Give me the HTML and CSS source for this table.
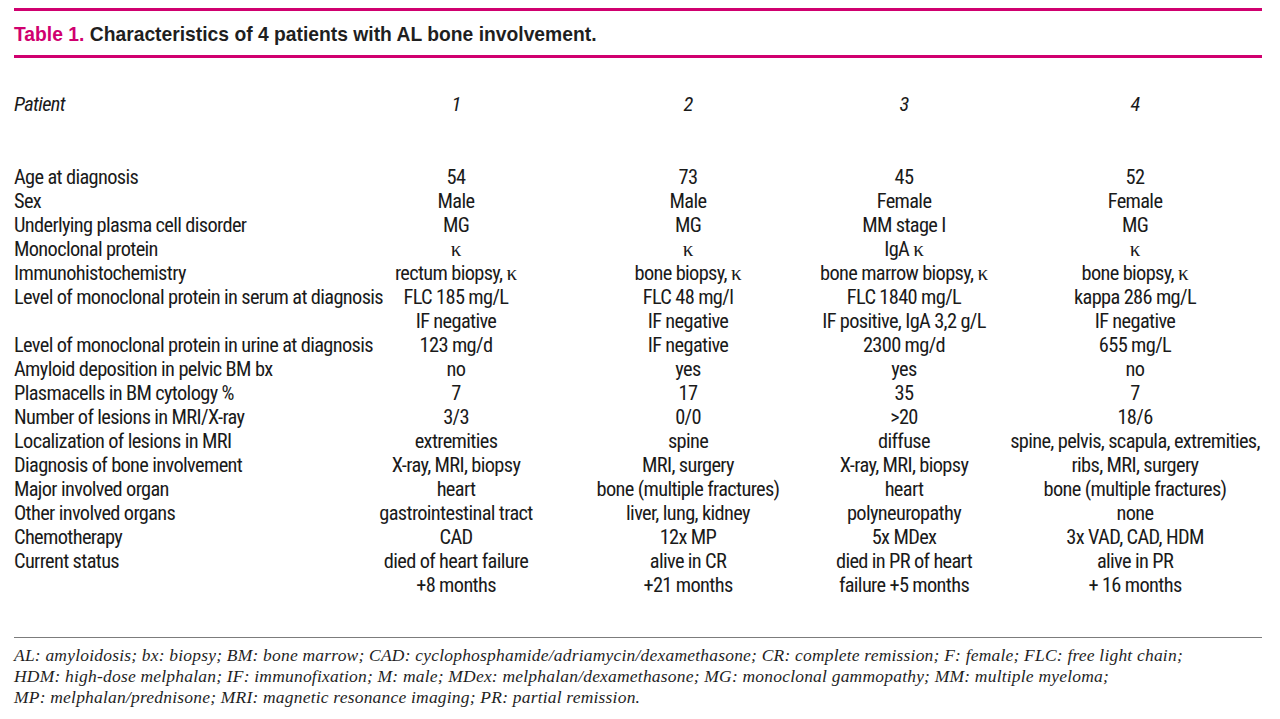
FILE: index.html
```html
<!DOCTYPE html>
<html lang="en">
<head>
<meta charset="utf-8">
<title>Table 1. Characteristics of 4 patients with AL bone involvement.</title>
<link rel="stylesheet" href="styles.css">
</head>
<body>
<div class="page">
  <div class="rule"></div>
  <h1 class="title"><span class="label">Table 1.</span> Characteristics of 4 patients with AL bone involvement.</h1>
  <div class="rule"></div>
  <table class="data">
    <colgroup>
      <col class="c-label"><col class="c1"><col class="c2"><col class="c3"><col class="c4">
    </colgroup>
    <thead>
      <tr class="head">
        <th>Patient</th><th>1</th><th>2</th><th>3</th><th>4</th>
      </tr>
    </thead>
    <tbody>
      <tr><td>Age at diagnosis</td><td>54</td><td>73</td><td>45</td><td>52</td></tr>
      <tr><td>Sex</td><td>Male</td><td>Male</td><td>Female</td><td>Female</td></tr>
      <tr><td>Underlying plasma cell disorder</td><td>MG</td><td>MG</td><td>MM stage I</td><td>MG</td></tr>
      <tr><td>Monoclonal protein</td><td><span class="k">κ</span></td><td><span class="k">κ</span></td><td>IgA <span class="k">κ</span></td><td><span class="k">κ</span></td></tr>
      <tr><td>Immunohistochemistry</td><td>rectum biopsy, <span class="k">κ</span></td><td>bone biopsy, <span class="k">κ</span></td><td>bone marrow biopsy, <span class="k">κ</span></td><td>bone biopsy, <span class="k">κ</span></td></tr>
      <tr><td>Level of monoclonal protein in serum at diagnosis</td><td>FLC 185 mg/L<br>IF negative</td><td>FLC 48 mg/l<br>IF negative</td><td>FLC 1840 mg/L<br>IF positive, IgA 3,2 g/L</td><td>kappa 286 mg/L<br>IF negative</td></tr>
      <tr><td>Level of monoclonal protein in urine at diagnosis</td><td>123 mg/d</td><td>IF negative</td><td>2300 mg/d</td><td>655 mg/L</td></tr>
      <tr><td>Amyloid deposition in pelvic BM bx</td><td>no</td><td>yes</td><td>yes</td><td>no</td></tr>
      <tr><td>Plasmacells in BM cytology %</td><td>7</td><td>17</td><td>35</td><td>7</td></tr>
      <tr><td>Number of lesions in MRI/X-ray</td><td>3/3</td><td>0/0</td><td>&gt;20</td><td>18/6</td></tr>
      <tr><td>Localization of lesions in MRI</td><td>extremities</td><td>spine</td><td>diffuse</td><td>spine, pelvis, scapula, extremities,</td></tr>
      <tr><td>Diagnosis of bone involvement</td><td>X-ray, MRI, biopsy</td><td>MRI, surgery</td><td>X-ray, MRI, biopsy</td><td>ribs, MRI, surgery</td></tr>
      <tr><td>Major involved organ</td><td>heart</td><td>bone (multiple fractures)</td><td>heart</td><td>bone (multiple fractures)</td></tr>
      <tr><td>Other involved organs</td><td>gastrointestinal tract</td><td>liver, lung, kidney</td><td>polyneuropathy</td><td>none</td></tr>
      <tr><td>Chemotherapy</td><td>CAD</td><td>12x MP</td><td>5x MDex</td><td>3x VAD, CAD, HDM</td></tr>
      <tr><td>Current status</td><td>died of heart failure<br>+8 months</td><td>alive in CR<br>+21 months</td><td>died in PR of heart<br>failure +5 months</td><td>alive in PR<br>+ 16 months</td></tr>
    </tbody>
  </table>
  <p class="notes">AL: amyloidosis; bx: biopsy; BM: bone marrow; CAD: cyclophosphamide/adriamycin/dexamethasone; CR: complete remission; F: female; FLC: free light chain;<br>HDM: high-dose melphalan; IF: immunofixation; M: male; MDex: melphalan/dexamethasone; MG: monoclonal gammopathy; MM: multiple myeloma;<br>MP: melphalan/prednisone; MRI: magnetic resonance imaging; PR: partial remission.</p>
</div>
</body>
</html>
```

FILE: styles.css
```css
html, body {
  margin: 0;
  padding: 0;
  background: #ffffff;
}

.page {
  width: 1248px;
  margin-left: 14px;
  padding-top: 8px;
  color: #1a1a1a;
}

.rule {
  height: 3px;
  background: #d0006f;
}

.title {
  margin: 0;
  height: 44px;
  padding-top: 4px;
  box-sizing: border-box;
  line-height: 40px;
  font-family: "Liberation Sans", Arial, sans-serif;
  font-weight: bold;
  font-size: 19.3px;
  color: #1f1f1f;
}

.title .label {
  color: #d0006f;
}

.data {
  width: 1248px;
  table-layout: fixed;
  border-collapse: collapse;
  font-family: "Roboto", "Open Sans", sans-serif;
  font-stretch: 75%;
  font-size: 20.4px;
  letter-spacing: -0.65px;
  line-height: 24px;
  border-bottom: 1px solid #7c7c7c;
}

.c-label { width: 322px; }
.c1 { width: 240px; }
.c2 { width: 224px; }
.c3 { width: 208px; }
.c4 { width: 254px; }

.data th,
.data td {
  padding: 0;
  white-space: nowrap;
  text-align: center;
  vertical-align: top;
}

.data th:first-child,
.data td:first-child {
  text-align: left;
}

.head th {
  font-weight: normal;
  font-style: italic;
  padding-top: 34px;
  padding-bottom: 49px;
}

.data tbody tr:last-child td {
  padding-bottom: 40px;
}

.k {
  font-family: "Liberation Serif", "Times New Roman", serif;
  font-stretch: normal;
  letter-spacing: 0;
  font-size: 21px;
}

.notes {
  margin: 0;
  padding-top: 7px;
  font-family: "Liberation Serif", "Times New Roman", serif;
  font-style: italic;
  font-size: 17.5px;
  letter-spacing: 0.2px;
  line-height: 21px;
  color: #1f1f1f;
}
```
